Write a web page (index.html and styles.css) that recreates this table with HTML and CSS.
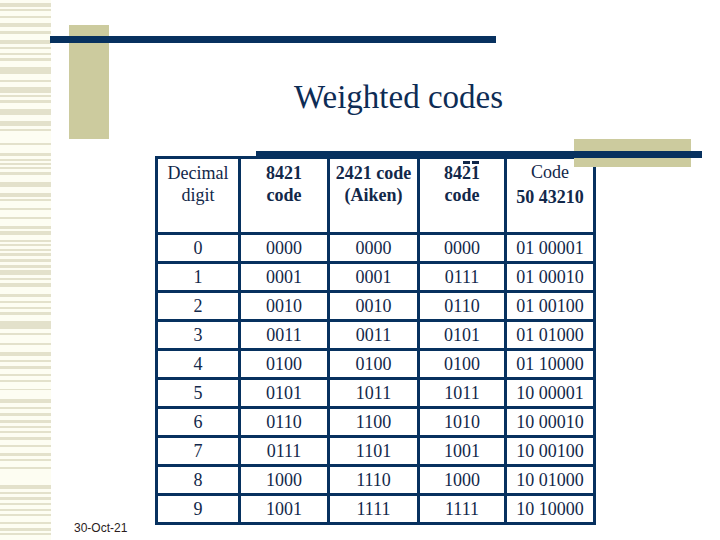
FILE: index.html
```html
<!DOCTYPE html>
<html>
<head>
<meta charset="utf-8">
<link rel="stylesheet" href="styles.css">
</head>
<body>
<div class="slide">
  <svg class="stripes" width="51" height="540" viewBox="0 0 51 540" aria-hidden="true">
    <rect width="51" height="540" fill="#fdfdf2"/>
    <g fill="#e3e1cb">
      <rect y="3" width="51" height="4"/><rect y="9" width="51" height="2"/><rect y="16" width="51" height="2"/>
      <rect y="23" width="51" height="4"/><rect y="31" width="51" height="3"/><rect y="40" width="51" height="4"/>
      <rect y="47" width="51" height="2"/><rect y="53" width="51" height="2"/><rect y="58" width="51" height="3"/>
      <rect y="67" width="51" height="7"/><rect y="80" width="51" height="2"/><rect y="87" width="51" height="6"/>
      <rect y="95" width="51" height="2"/><rect y="100" width="51" height="3"/><rect y="109" width="51" height="6"/>
      <rect y="121" width="51" height="5"/><rect y="129" width="51" height="2"/><rect y="143" width="51" height="2"/>
      <rect y="153" width="51" height="3"/><rect y="159" width="51" height="2"/><rect y="163" width="51" height="2"/>
      <rect y="167" width="51" height="2"/><rect y="172" width="51" height="3"/><rect y="182" width="51" height="5"/>
      <rect y="193" width="51" height="4"/><rect y="199" width="51" height="2"/><rect y="208" width="51" height="2"/>
      <rect y="217" width="51" height="2"/><rect y="226" width="51" height="3"/><rect y="231" width="51" height="4"/>
      <rect y="240" width="51" height="2"/><rect y="244" width="51" height="2"/><rect y="249" width="51" height="2"/>
      <rect y="253" width="51" height="3"/><rect y="259" width="51" height="3"/><rect y="265" width="51" height="3"/>
      <rect y="270" width="51" height="5"/><rect y="278" width="51" height="2"/><rect y="283" width="51" height="4"/>
      <rect y="294" width="51" height="3"/><rect y="301" width="51" height="2"/><rect y="307" width="51" height="2"/>
      <rect y="312" width="51" height="3"/><rect y="321" width="51" height="8"/><rect y="333" width="51" height="2"/>
      <rect y="343" width="51" height="2"/><rect y="352" width="51" height="4"/><rect y="360" width="51" height="2"/>
      <rect y="366" width="51" height="3"/><rect y="374" width="51" height="2"/><rect y="380" width="51" height="2"/>
      <rect y="389" width="51" height="1"/><rect y="399" width="51" height="4"/><rect y="407" width="51" height="2"/>
      <rect y="413" width="51" height="3"/><rect y="420" width="51" height="3"/><rect y="426" width="51" height="2"/>
      <rect y="431" width="51" height="2"/><rect y="437" width="51" height="3"/><rect y="445" width="51" height="2"/>
      <rect y="453" width="51" height="3"/><rect y="459" width="51" height="2"/><rect y="467" width="51" height="2"/>
      <rect y="485" width="51" height="4"/><rect y="492" width="51" height="2"/><rect y="497" width="51" height="3"/>
      <rect y="503" width="51" height="2"/><rect y="509" width="51" height="2"/><rect y="514" width="51" height="2"/>
      <rect y="522" width="51" height="2"/><rect y="528" width="51" height="3"/><rect y="533" width="51" height="2"/>
    </g>
  </svg>

  <div class="main">
    <h1 class="title">Weighted codes</h1>
    <div class="date">30-Oct-21</div>
    <table class="codes">
      <colgroup>
        <col class="c1"><col class="c2"><col class="c3"><col class="c4"><col class="c5">
      </colgroup>
      <thead>
        <tr>
          <th>Decimal<br>digit</th>
          <th class="bold">8421<br>code</th>
          <th class="bold">2421 code<br>(Aiken)</th>
          <th class="bold">84<span class="bar">2</span><span class="bar">1</span><br>code</th>
          <th class="tall">Code<br><b>50 43210</b></th>
        </tr>
      </thead>
      <tbody>
        <tr><td>0</td><td>0000</td><td>0000</td><td>0000</td><td>01 00001</td></tr>
        <tr><td>1</td><td>0001</td><td>0001</td><td>0111</td><td>01 00010</td></tr>
        <tr><td>2</td><td>0010</td><td>0010</td><td>0110</td><td>01 00100</td></tr>
        <tr><td>3</td><td>0011</td><td>0011</td><td>0101</td><td>01 01000</td></tr>
        <tr><td>4</td><td>0100</td><td>0100</td><td>0100</td><td>01 10000</td></tr>
        <tr><td>5</td><td>0101</td><td>1011</td><td>1011</td><td>10 00001</td></tr>
        <tr><td>6</td><td>0110</td><td>1100</td><td>1010</td><td>10 00010</td></tr>
        <tr><td>7</td><td>0111</td><td>1101</td><td>1001</td><td>10 00100</td></tr>
        <tr><td>8</td><td>1000</td><td>1110</td><td>1000</td><td>10 01000</td></tr>
        <tr><td>9</td><td>1001</td><td>1111</td><td>1111</td><td>10 10000</td></tr>
      </tbody>
    </table>
  </div>

  <div class="deco khaki-top"></div>
  <div class="deco navy-top"></div>
  <div class="deco khaki-right"></div>
  <div class="deco navy-mid"></div>
</div>
</body>
</html>
```

FILE: styles.css
```css
html, body {
  margin: 0;
  padding: 0;
  background: #ffffff;
}

.slide {
  position: relative;
  width: 720px;
  height: 540px;
  overflow: hidden;
  display: grid;
  grid-template-columns: 51px 1fr;
  background: #ffffff;
}

.stripes {
  display: block;
}

.main {
  display: grid;
  grid-template-columns: 104px auto 1fr;
  grid-template-rows: auto 1fr;
  font-family: "Liberation Serif", "Times New Roman", serif;
}

.title {
  grid-column: 1 / 4;
  margin: 78px 0 0 0;
  padding-left: 243px;
  font-family: "Liberation Serif", "Times New Roman", serif;
  font-weight: normal;
  font-size: 33px;
  line-height: 38px;
  color: #0d2c55;
}

.date {
  grid-column: 1;
  grid-row: 2;
  align-self: end;
  padding: 0 0 5px 23px;
  font-family: "Liberation Sans", Arial, sans-serif;
  font-size: 12px;
  line-height: 14px;
  color: #2b1c1c;
}

.codes {
  grid-column: 2;
  grid-row: 2;
  align-self: start;
  margin-top: 40px;
  border-collapse: collapse;
  table-layout: fixed;
  width: 441px;
  color: #12284a;
  border: 3px solid #07315f;
}

.c1 { width: 83px; }
.c2 { width: 89px; }
.c3 { width: 90px; }
.c4 { width: 87px; }
.c5 { width: 89px; }

.codes th,
.codes td {
  border: 3px solid #07315f;
  text-align: center;
  padding: 0;
}

.codes th {
  height: 70px;
  vertical-align: top;
  padding-top: 3px;
  font-size: 18px;
  line-height: 22px;
  font-weight: normal;
}

.codes th.bold {
  font-weight: bold;
}

.codes th.tall {
  line-height: 25px;
  padding-top: 1px;
}

.codes td {
  height: 26px;
  font-size: 18px;
  line-height: 20px;
  vertical-align: middle;
}

.bar {
  position: relative;
}

.bar::before {
  content: "";
  position: absolute;
  left: 1px;
  right: 1px;
  top: -2px;
  height: 3px;
  background: #12284a;
}

.deco {
  position: absolute;
}

.khaki-top {
  left: 69px;
  top: 25px;
  width: 40px;
  height: 114px;
  background: #cccb9e;
}

.navy-top {
  left: 50px;
  top: 36px;
  width: 446px;
  height: 7px;
  background: #07315f;
}

.khaki-right {
  left: 574px;
  top: 139px;
  width: 117px;
  height: 28px;
  background: #cccb9e;
}

.navy-mid {
  left: 256px;
  top: 151px;
  width: 446px;
  height: 7px;
  background: #07315f;
}
```
